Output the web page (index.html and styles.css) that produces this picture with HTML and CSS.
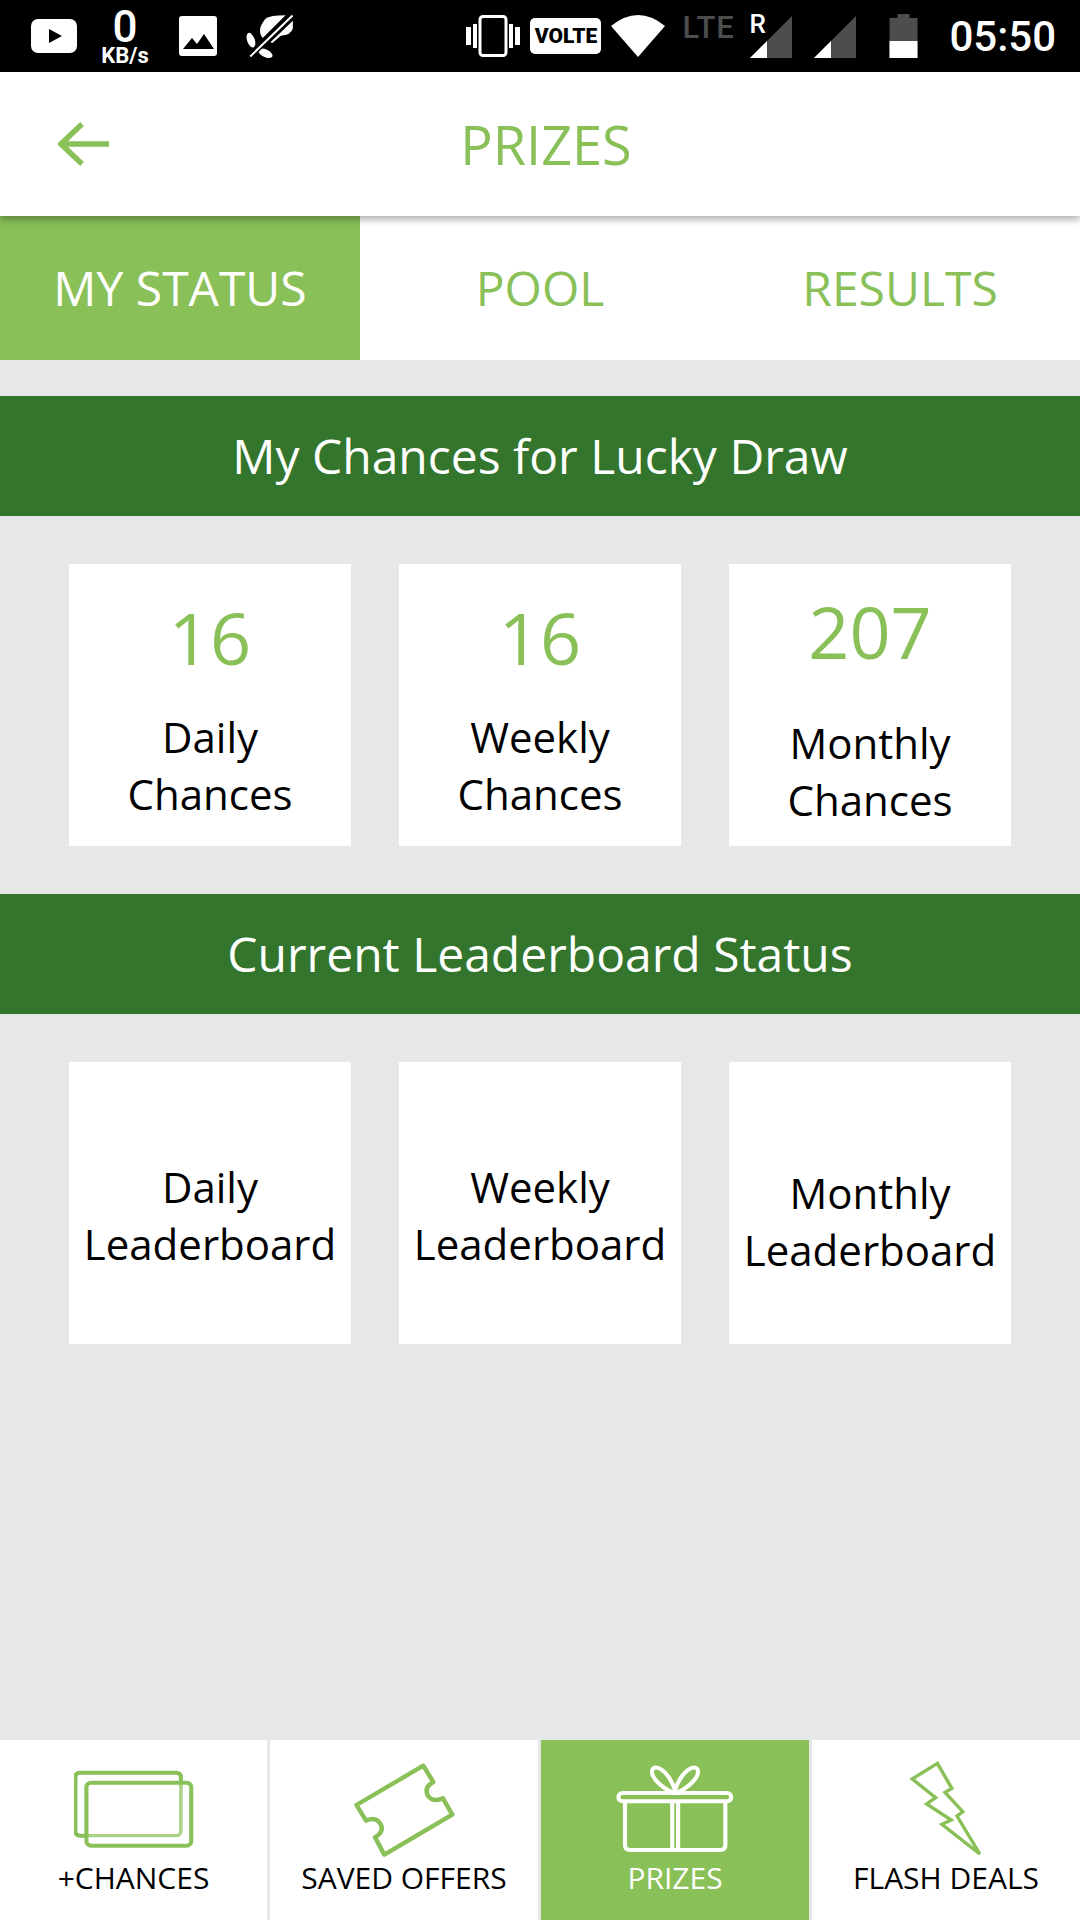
FILE: index.html
```html
<!DOCTYPE html>
<html lang="en">
  <head>
    <meta charset="UTF-8" />
    <meta name="viewport" content="width=device-width, initial-scale=1.0" />
    <title>Prizes</title>
    <link rel="stylesheet" href="styles.css">
  </head>

  <body>
    <div class="page">
      <div class="statusbar">
        <svg class="st-youtube" viewBox="0 0 46 34"><rect width="46" height="34" rx="7" fill="#fff"/><path d="M18 10l13 7-13 7z" fill="#000"/></svg>
        <div class="st-speed"><span class="st-speed-num">0</span><span class="st-speed-unit">KB/s</span></div>
        <svg class="st-image" viewBox="0 0 38 40"><rect width="38" height="40" rx="3" fill="#fff"/><path d="M4 33l9-11 5 6 7-10 10 15z" fill="#000"/></svg>
        <svg class="st-leaf" viewBox="710 40 150 135">
          <path d="M772 56Q785 46 830 46L764 112Q745 88 772 56Z" fill="#fff"/>
          <path d="M851 62V84Q846 104 816 105L792 126 786 124Z" fill="#fff"/>
          <ellipse cx="730" cy="118" rx="11" ry="22" transform="rotate(-20 730 118)" fill="#fff"/>
          <ellipse cx="772" cy="156" rx="22" ry="11" transform="rotate(25 772 156)" fill="#fff"/>
          <path d="M728 165L850 47" stroke="#000" stroke-width="14"/>
          <path d="M728 165L850 47" stroke="#fff" stroke-width="6"/>
        </svg>
        <div class="st-spacer"></div>
        <svg class="st-vibrate" viewBox="0 0 54 42"><rect x="14" y="1.500" width="26" height="39" rx="3" fill="none" stroke="#fff" stroke-width="3"/><path d="M0 12h5v18H0zM49 12h5v18h-5z" fill="#fff"/><path d="M7 9h4v24H7zM43 9h4v24h-4z" fill="#fff"/></svg>
        <div class="st-volte">VOLTE</div>
        <svg class="st-wifi" viewBox="0 0 54 42"><path d="M0 11Q27-11 54 11L27 42z" fill="#fff"/></svg>
        <div class="st-lte">LTE</div>
        <div class="st-signal">
          <span class="st-roam">R</span>
          <svg class="st-bars" viewBox="0 0 42 42"><path d="M42 0V42H0z" fill="#4d4d4d"/><path d="M17 25V42H0z" fill="#fff"/></svg>
        </div>
        <svg class="st-bars st-bars-two" viewBox="0 0 42 42"><path d="M42 0V42H0z" fill="#4d4d4d"/><path d="M17 25V42H0z" fill="#fff"/></svg>
        <svg class="st-battery" viewBox="0 0 28 44"><path d="M8 0h12v4h8v40H0V4h8z" fill="#4d4d4d"/><path d="M0 27h28v17H0z" fill="#fff"/></svg>
        <div class="st-time">05:50</div>
      </div>

      <div class="appbar">
        <svg class="back" viewBox="0 0 52 44"><path d="M51 22H4M24 2L3 22l21 20" fill="none" stroke="#8ac058" stroke-width="5.500"/></svg>
        <div class="appbar-title">PRIZES</div>
      </div>

      <div class="tabs">
        <div class="tab active">MY STATUS</div>
        <div class="tab">POOL</div>
        <div class="tab">RESULTS</div>
      </div>

      <div class="content">
        <h2 class="band">My Chances for Lucky Draw</h2>
        <div class="cards">
          <div class="card">
            <div class="card-num">16</div>
            <div class="card-label">Daily<br>Chances</div>
          </div>
          <div class="card">
            <div class="card-num">16</div>
            <div class="card-label">Weekly<br>Chances</div>
          </div>
          <div class="card card-shift">
            <div class="card-num">207</div>
            <div class="card-label">Monthly<br>Chances</div>
          </div>
        </div>

        <h2 class="band">Current Leaderboard Status</h2>
        <div class="cards">
          <div class="card card-board">
            <div class="card-label">Daily<br>Leaderboard</div>
          </div>
          <div class="card card-board">
            <div class="card-label">Weekly<br>Leaderboard</div>
          </div>
          <div class="card card-board card-low">
            <div class="card-label">Monthly<br>Leaderboard</div>
          </div>
        </div>
      </div>

      <div class="bottomnav">
        <div class="nav-item">
          <svg class="nav-icon" viewBox="214 90 348 300" preserveAspectRatio="none">
            <rect x="218" y="128" width="306" height="189" rx="14" fill="none" stroke="#a9d286" stroke-width="10"/>
            <path d="M250 128H232Q218 128 218 142V303Q218 317 232 317H250M524 158V142Q524 128 510 128H250" fill="none" stroke="#8ac058" stroke-width="12"/>
            <rect x="250" y="158" width="304" height="189" rx="14" fill="none" stroke="#8ac058" stroke-width="12"/>
          </svg>
          <div class="nav-label">+CHANCES</div>
        </div>
        <div class="nav-item">
          <svg class="nav-icon" viewBox="998 90 348 300" preserveAspectRatio="none">
            <path d="M1228 107L1257 156Q1228 172 1242 198 1256 218 1285 205L1312 254 1115 374 1088 322Q1116 304 1104 282 1090 258 1062 272L1034 225Z" fill="none" stroke="#8ac058" stroke-width="13" stroke-linejoin="round"/>
          </svg>
          <div class="nav-label">SAVED OFFERS</div>
        </div>
        <div class="nav-item active">
          <svg class="nav-icon" viewBox="218 90 348 300" preserveAspectRatio="none">
            <g fill="none" stroke="#fff" stroke-width="12">
              <rect x="228" y="189" width="327" height="25" rx="12"/>
              <path d="M247 214V345Q247 360 262 360H523Q538 360 538 345V214"/>
              <path d="M384 214V360M401 214V360"/>
              <path d="M384 187C350 170 320 140 326 120 334 100 372 120 392 180 412 120 450 100 458 120 464 140 434 170 400 187"/>
            </g>
          </svg>
          <div class="nav-label">PRIZES</div>
        </div>
        <div class="nav-item">
          <svg class="nav-icon" viewBox="1006 90 348 300" preserveAspectRatio="none">
            <path d="M1155 100L1082 147 1150 203 1124 222 1195 270 1168 283 1278 372 1212 258 1229 245 1177 187 1197 175Z" fill="none" stroke="#8ac058" stroke-width="10" stroke-linejoin="miter"/>
          </svg>
          <div class="nav-label">FLASH DEALS</div>
        </div>
      </div>
    </div>
  </body>
</html>
```

FILE: styles.css
```css
* {
  box-sizing: border-box;
}

html,
body {
  margin: 0;
  padding: 0;
}

.page {
  width: 1080px;
  height: 1920px;
  display: flex;
  flex-direction: column;
  background: #e7e7e7;
  font-family: "Open Sans", "Liberation Sans", sans-serif;
  overflow: hidden;
}

/* status bar */
.statusbar {
  height: 72px;
  flex: none;
  display: flex;
  align-items: center;
  background: #000;
  color: #fff;
  font-family: Roboto, "Liberation Sans", sans-serif;
  padding-left: 31px;
}

.st-spacer {
  flex: 1;
}

.st-youtube {
  width: 46px;
  height: 34px;
}

.st-speed {
  width: 50px;
  margin-left: 23px;
  padding-top: 2px;
  display: flex;
  flex-direction: column;
  align-items: center;
  font-weight: 500;
}

.st-speed-num {
  font-size: 44px;
  line-height: 38px;
}

.st-speed-unit {
  font-size: 22px;
  line-height: 20px;
  font-weight: 700;
}

.st-image {
  width: 38px;
  height: 40px;
  margin-left: 29px;
}

.st-leaf {
  width: 52px;
  height: 47px;
  margin-left: 27px;
}

.st-vibrate {
  width: 54px;
  height: 42px;
  margin-right: 1px;
}

.st-volte {
  width: 71px;
  height: 36px;
  margin-left: 9px;
  background: #fff;
  border-radius: 5px;
  color: #000;
  font-size: 21px;
  font-weight: 900;
  line-height: 36px;
  text-align: center;
}

.st-wifi {
  width: 54px;
  height: 42px;
  margin-left: 10px;
}

.st-lte {
  width: 54px;
  margin-left: 17px;
  margin-bottom: 17px;
  color: #4d4d4d;
  font-size: 31px;
  font-weight: 500;
  line-height: 30px;
  letter-spacing: 1px;
}

.st-signal {
  position: relative;
  margin-left: 13px;
  margin-top: 2px;
  display: flex;
}

.st-roam {
  position: absolute;
  left: 0;
  top: -5px;
  font-size: 26px;
  font-weight: 500;
  line-height: 26px;
}

.st-bars {
  width: 44px;
  height: 42px;
  display: block;
}

.st-bars-two {
  margin-left: 20px;
  margin-top: 2px;
}

.st-battery {
  width: 29px;
  height: 44px;
  margin-left: 32px;
}

.st-time {
  margin-left: 31px;
  margin-right: 24px;
  font-size: 42px;
  font-weight: 500;
}

/* header */
.appbar {
  height: 144px;
  flex: none;
  display: flex;
  align-items: center;
  background: #fff;
  position: relative;
  z-index: 2;
  box-shadow: 0 3px 8px rgba(0, 0, 0, 0.35);
}

.back {
  width: 52px;
  height: 44px;
  margin-left: 58px;
}

.appbar-title {
  flex: 1;
  margin-right: 98px;
  text-align: center;
  color: #8ac058;
  font-size: 54px;
}

.tabs {
  height: 144px;
  flex: none;
  display: grid;
  grid-template-columns: repeat(3, 1fr);
  background: #fff;
}

.tab {
  display: flex;
  align-items: center;
  justify-content: center;
  padding-bottom: 2px;
  color: #8ac058;
  font-size: 48px;
}

.tab.active {
  background: #8ac058;
  color: #fff;
}

/* content */
.content {
  flex: 1;
  padding-top: 36px;
}

.band {
  height: 120px;
  margin: 0;
  padding-bottom: 2px;
  display: flex;
  align-items: center;
  justify-content: center;
  background: #33752c;
  color: #fff;
  font-size: 48px;
  font-weight: 400;
}

.cards {
  display: flex;
  justify-content: center;
  gap: 48px;
  padding: 48px 0;
}

.card {
  width: 282px;
  height: 282px;
  display: flex;
  flex-direction: column;
  align-items: center;
  justify-content: center;
  background: #fff;
  text-align: center;
}

.card-num {
  margin-bottom: 22px;
  color: #8ac058;
  font-size: 72px;
  line-height: 98px;
}

.card-label {
  color: #000;
  font-size: 42px;
  line-height: 57px;
}

.card-shift .card-num {
  margin-bottom: 34px;
}

.card-board {
  padding-top: 23px;
}

.card-board.card-low {
  padding-top: 35px;
}

/* bottom nav */
.bottomnav {
  height: 180px;
  flex: none;
  display: grid;
  grid-template-columns: 267px 268px 268px 1fr;
  gap: 3px;
}

.nav-item {
  display: flex;
  flex-direction: column;
  align-items: center;
  padding-top: 20px;
  background: #fff;
  color: #000;
}

.nav-item.active {
  background: #8ac058;
  color: #fff;
}

.nav-icon {
  width: 120px;
  height: 100px;
  display: block;
}

.nav-label {
  font-size: 30px;
  line-height: 36px;
}
```
